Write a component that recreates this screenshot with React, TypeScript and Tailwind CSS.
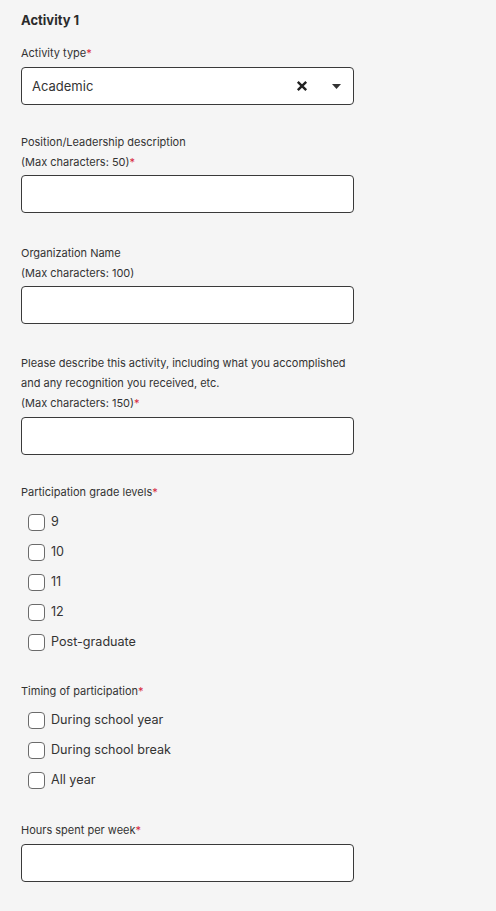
const Req = () => <span className="text-[#d7263d]">*</span>;

function TextInput() {
  return <div className="h-[38px] w-[333px] rounded-[4px] border border-[#3a3a3a] bg-white" />;
}

function Check({ label }: { label: string }) {
  return (
    <label className="flex h-[30px] items-center pl-[7px]">
      <span className="h-[17px] w-[17px] shrink-0 rounded-[4px] border border-[#6b6b6b] bg-white" />
      <span className="ml-[6px] text-[12.6px] text-[#333]">{label}</span>
    </label>
  );
}

export default function App() {
  return (
    <div
      className="min-h-[911px] bg-[#f5f5f5] px-[21px] pt-[10px] text-[#333]"
      style={{ fontFamily: 'Inter, "Liberation Sans", sans-serif' }}
    >
      <h1 className="text-[13px] font-bold leading-5 text-[#2b2b2b]">Activity 1</h1>

      <div className="mt-[13px]">
        <p className="text-[11px] leading-5">
          Activity type<Req />
        </p>
        <div className="mt-[4px] flex h-[38px] w-[333px] items-center rounded-[4px] border border-[#3a3a3a] bg-white pl-[10px] pr-[12px]">
          <span className="mt-[2px] flex-1 text-[13px] text-[#333]">Academic</span>
          <svg width="12" height="12" viewBox="0 0 10 10" className="mr-[24px]">
            <path d="M1.5 1.5 L8.5 8.5 M8.5 1.5 L1.5 8.5" stroke="#222" strokeWidth="2" />
          </svg>
          <svg width="9" height="5" viewBox="0 0 9 5">
            <path d="M0 0 H9 L4.5 5 Z" fill="#333" />
          </svg>
        </div>
      </div>

      <div className="mt-[27px]">
        <p className="text-[11px] leading-5">Position/Leadership description</p>
        <p className="text-[11px] leading-5">
          (Max characters: 50)<Req />
        </p>
        <div className="mt-[3px]">
          <TextInput />
        </div>
      </div>

      <div className="mt-[30px]">
        <p className="text-[11px] leading-5">Organization Name</p>
        <p className="text-[11px] leading-5">(Max characters: 100)</p>
        <div className="mt-[3px]">
          <TextInput />
        </div>
      </div>

      <div className="mt-[29px]">
        <p className="text-[11px] leading-5">Please describe this activity, including what you accomplished</p>
        <p className="text-[11px] leading-5">and any recognition you received, etc.</p>
        <p className="text-[11px] leading-5">
          (Max characters: 150)<Req />
        </p>
        <div className="mt-[4px]">
          <TextInput />
        </div>
      </div>

      <div className="mt-[27px]">
        <p className="text-[11px] leading-5">
          Participation grade levels<Req />
        </p>
        <div className="mt-[5px] flex flex-col">
          <Check label="9" />
          <Check label="10" />
          <Check label="11" />
          <Check label="12" />
          <Check label="Post-graduate" />
        </div>
      </div>

      <div className="mt-[24px]">
        <p className="text-[11px] leading-5">
          Timing of participation<Req />
        </p>
        <div className="mt-[4px] flex flex-col">
          <Check label="During school year" />
          <Check label="During school break" />
          <Check label="All year" />
        </div>
      </div>

      <div className="mt-[25px]">
        <p className="text-[11px] leading-5">
          Hours spent per week<Req />
        </p>
        <div className="mt-[4px]">
          <TextInput />
        </div>
      </div>
    </div>
  );
}
